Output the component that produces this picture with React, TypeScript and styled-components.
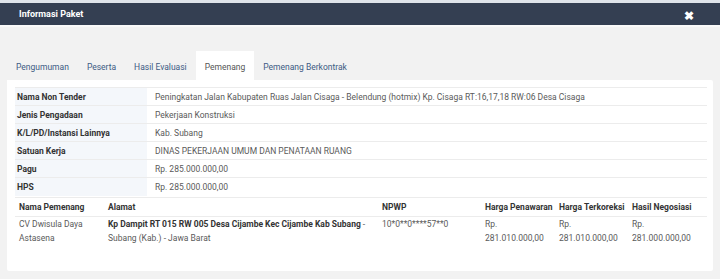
import React from "react";
import styled, { createGlobalStyle } from "styled-components";

const GlobalStyle = createGlobalStyle`
    html, body {
        margin: 0;
        padding: 0;
        background: #f2f2f2;
        font-family: Roboto, "Liberation Sans", sans-serif;
    }
`
const Modal = styled.div`
    width: 720px;
    height: 279px;
    background: #f2f2f2;
    border-top: 3px solid #dfe4ea;
    box-sizing: border-box;
    overflow: hidden;
`
const Header = styled.div`
    height: 22px;
    background: #343f52;
    display: flex;
    align-items: center;
    justify-content: space-between;
    padding: 0 26px 0 19px;
    border-bottom: 2px solid #f9f9f9;
`
const Title = styled.h4`
    margin: 0;
    font-size: 9px;
    font-weight: 700;
    color: #ffffff;
`
const Close = styled.span`
    color: #ffffff;
    font-size: 12px;
    font-weight: 700;
    line-height: 1;
    margin-top: 3px;
`
const Body = styled.div`
    padding: 24px 7px 0 7px;
`
const Tabs = styled.ul`
    list-style: none;
    margin: 0;
    padding: 0;
    display: flex;
    height: 29px;
`
const Tab = styled.li<{ $active?: boolean }>`
    display: flex;
    align-items: center;
    padding: 2px 9px 0 9px;
    font-size: 8.5px;
    color: ${props => props.$active ? "#555555" : "#3d5b84"};
    background: ${props => props.$active ? "#ffffff" : "transparent"};
`
const Panel = styled.div`
    background: #ffffff;
    height: 191px;
    padding: 7px 6px 0 8px;
    box-sizing: border-box;
    border-radius: 0 2px 2px 2px;
`
const InfoTable = styled.table`
    width: 100%;
    border-collapse: collapse;
    table-layout: fixed;
    font-size: 8.5px;
`
const Row = styled.tr`
    height: 18px;
    border-top: 1px solid #ececec;
`
const Label = styled.th`
    text-align: left;
    font-weight: 700;
    color: #333333;
    background: #f4f7fb;
    padding: 0 2px;
    white-space: nowrap;
`
const Value = styled.td`
    color: #5a5a5a;
    padding: 0 8px;
    white-space: nowrap;
`
const WinnerTable = styled.table`
    width: 100%;
    border-collapse: collapse;
    table-layout: fixed;
    font-size: 8.5px;
    margin-top: 1px;
    border-top: 1px solid #ececec;
`
const HeadCell = styled.th`
    height: 18px;
    text-align: left;
    font-weight: 700;
    color: #333333;
    padding: 0 0 0 4px;
    white-space: nowrap;
    border-bottom: 1px solid #ececec;
`
const Cell = styled.td`
    vertical-align: top;
    color: #5a5a5a;
    line-height: 14.5px;
    padding: 0 4px;
`
const Address = styled.strong`
    color: #333333;
`

const info = [
    ["Nama Non Tender", "Peningkatan Jalan Kabupaten Ruas Jalan Cisaga - Belendung (hotmix) Kp. Cisaga RT:16,17,18 RW:06 Desa Cisaga"],
    ["Jenis Pengadaan", "Pekerjaan Konstruksi"],
    ["K/L/PD/Instansi Lainnya", "Kab. Subang"],
    ["Satuan Kerja", "DINAS PEKERJAAN UMUM DAN PENATAAN RUANG"],
    ["Pagu", "Rp. 285.000.000,00"],
    ["HPS", "Rp. 285.000.000,00"],
]

const tabs = ["Pengumuman", "Peserta", "Hasil Evaluasi", "Pemenang", "Pemenang Berkontrak"]

const columns = [
    { title: "Nama Pemenang", width: 89 },
    { title: "Alamat", width: 274 },
    { title: "NPWP", width: 103 },
    { title: "Harga Penawaran", width: 74 },
    { title: "Harga Terkoreksi", width: 73 },
    { title: "Hasil Negosiasi", width: 79 },
]

export default function App() {
    return (
        <Modal>
            <GlobalStyle />
            <Header>
                <Title>Informasi Paket</Title>
                <Close>✖</Close>
            </Header>
            <Body>
                <Tabs>
                    {tabs.map(t => <Tab key={t} $active={t === "Pemenang"}>{t}</Tab>)}
                </Tabs>
                <Panel>
                    <InfoTable>
                        <colgroup>
                            <col style={{ width: 132 }} />
                            <col />
                        </colgroup>
                        <tbody>
                            {info.map(([k, v]) => (
                                <Row key={k}>
                                    <Label>{k}</Label>
                                    <Value>{v}</Value>
                                </Row>
                            ))}
                        </tbody>
                    </InfoTable>
                    <WinnerTable>
                        <colgroup>
                            {columns.map(c => <col key={c.title} style={{ width: c.width }} />)}
                        </colgroup>
                        <thead>
                            <tr>
                                {columns.map(c => <HeadCell key={c.title}>{c.title}</HeadCell>)}
                            </tr>
                        </thead>
                        <tbody>
                            <tr>
                                <Cell>CV Dwisula Daya Astasena</Cell>
                                <Cell><Address>Kp Dampit RT 015 RW 005 Desa Cijambe Kec Cijambe Kab Subang</Address> - Subang (Kab.) - Jawa Barat</Cell>
                                <Cell>10*0**0****57**0</Cell>
                                <Cell>Rp. 281.010.000,00</Cell>
                                <Cell>Rp. 281.010.000,00</Cell>
                                <Cell>Rp. 281.000.000,00</Cell>
                            </tr>
                        </tbody>
                    </WinnerTable>
                </Panel>
            </Body>
        </Modal>
    )
}
